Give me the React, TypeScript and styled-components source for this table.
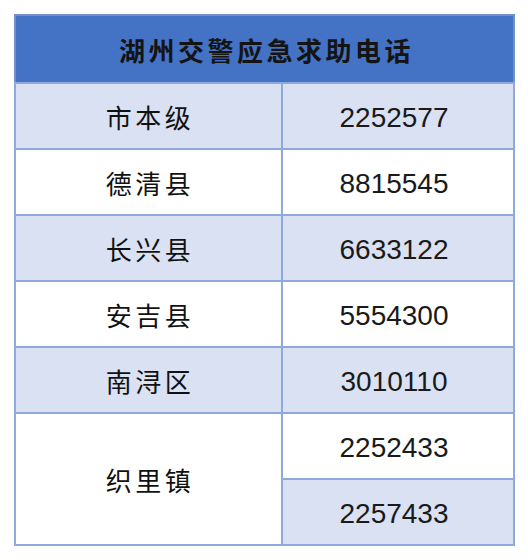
import React from 'react';
import styled, {createGlobalStyle} from "styled-components";

const GlobalStyle = createGlobalStyle`
  body {
    margin: 0;
    background: #ffffff;
    font-family: "Liberation Sans", "Noto Sans CJK SC", sans-serif;
  }
`

type Row = {
    area: string
    phones: string[]
}

const rows: Row[] = [
    {area: '市本级', phones: ['2252577']},
    {area: '德清县', phones: ['8815545']},
    {area: '长兴县', phones: ['6633122']},
    {area: '安吉县', phones: ['5554300']},
    {area: '南浔区', phones: ['3010110']},
    {area: '织里镇', phones: ['2252433', '2257433']},
]

export default function App() {
    let line = 0
    return (
        <>
            <GlobalStyle/>
            <Page>
                <Table>
                    <colgroup>
                        <Col $width={267}/>
                        <Col $width={232}/>
                    </colgroup>
                    <thead>
                    <tr>
                        <HeadCell colSpan={2}>湖州交警应急求助电话</HeadCell>
                    </tr>
                    </thead>
                    <tbody>
                    {rows.map((row) => row.phones.map((phone, i) => {
                        const shaded = line % 2 === 0
                        line++
                        return (
                            <tr key={phone}>
                                {i === 0 && (
                                    <AreaCell rowSpan={row.phones.length} $shaded={row.phones.length > 1 ? false : shaded}>
                                        {row.area}
                                    </AreaCell>
                                )}
                                <PhoneCell $shaded={shaded}>{phone}</PhoneCell>
                            </tr>
                        )
                    }))}
                    </tbody>
                </Table>
            </Page>
        </>
    );
}

const Page = styled.div`
  padding: 14px 15px 14px 14px;
`

const Table = styled.table`
  width: 499px;
  border-collapse: collapse;
  border: 2px solid #7391c6;
  table-layout: fixed;
`

const Col = styled.col<{ $width: number }>`
  width: ${({$width}) => $width}px;
`

const HeadCell = styled.th`
  box-sizing: border-box;
  height: 68px;
  padding: 0 0 0 4px;
  background-color: #4472c4;
  color: #141414;
  font-family: "Noto Sans CJK SC", sans-serif;
  font-size: 26px;
  font-weight: 700;
  letter-spacing: 3.5px;
  text-align: center;
`

const Cell = styled.td<{ $shaded: boolean }>`
  box-sizing: border-box;
  height: 66px;
  padding: 0;
  border: 2px solid #8eaadb;
  background-color: ${({$shaded}) => ($shaded ? '#d9e1f2' : '#ffffff')};
  color: #111111;
  text-align: center;
  vertical-align: middle;
  line-height: 1;
`

const AreaCell = styled(Cell)`
  font-family: "Noto Sans CJK SC", sans-serif;
  font-size: 26px;
  letter-spacing: 3.5px;
  padding-left: 3px;
  padding-top: 2px;
`

const PhoneCell = styled(Cell)`
  font-family: "Liberation Sans", sans-serif;
  font-size: 28px;
  color: #1a1a1a;
  padding-top: 3px;
  padding-right: 8px;
`
